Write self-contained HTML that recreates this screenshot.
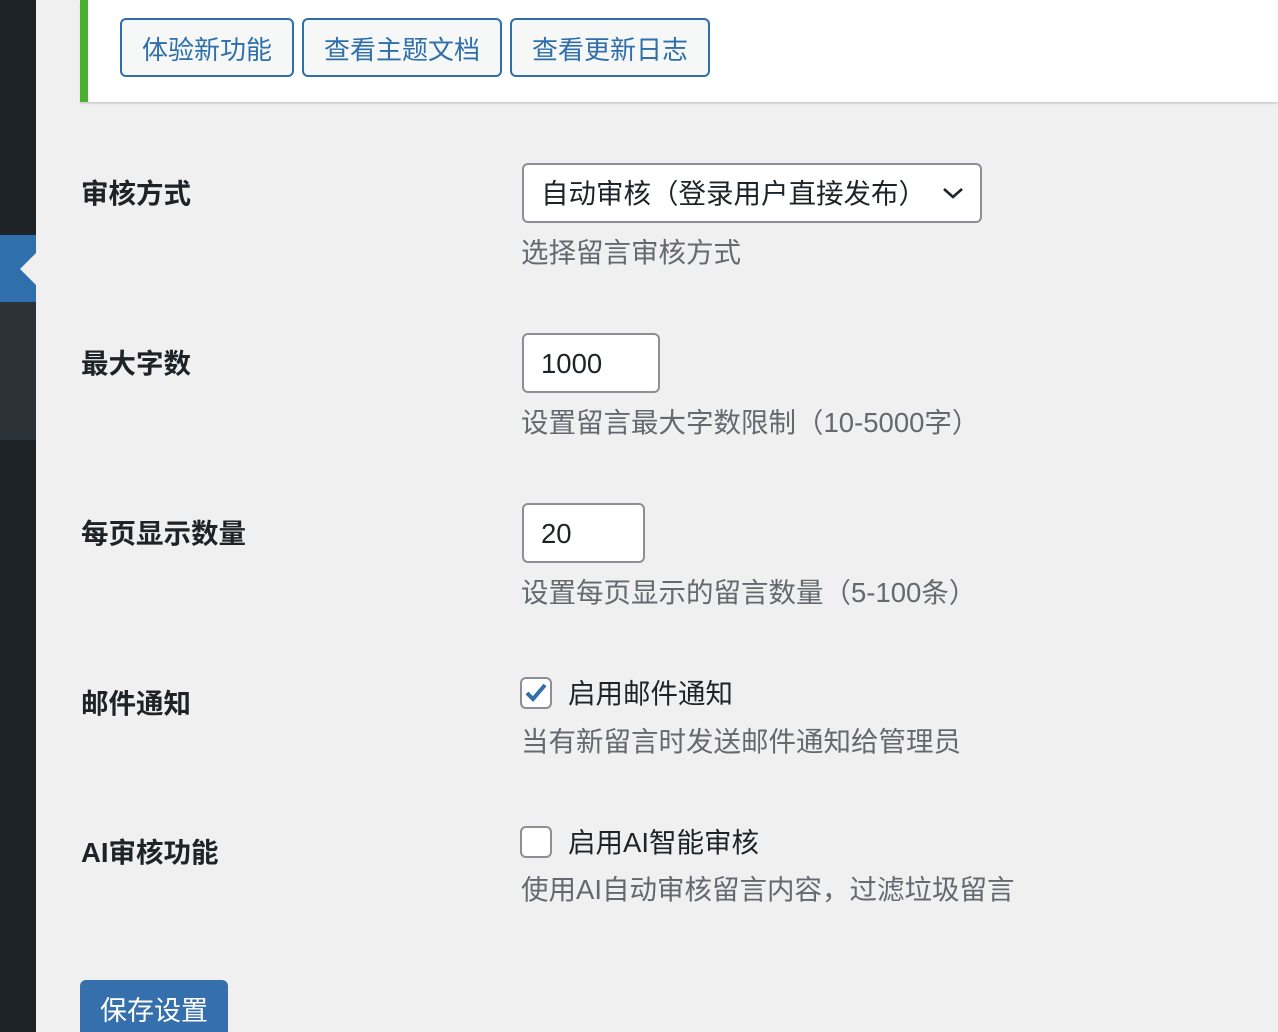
<!DOCTYPE html>
<html><head><meta charset="utf-8"><style>
*{box-sizing:border-box;margin:0;padding:0}
html{overflow:hidden;height:1032px}
body{width:1278px;height:1032px;overflow:hidden;background:#f0f0f1;font-family:"Liberation Sans","Noto Sans CJK SC",sans-serif;position:relative;color:#1d2327}
.abs{position:absolute;white-space:nowrap}
.side{position:absolute;left:0;top:0;width:36px;height:1032px;background:#1d2327}
.notice{position:absolute;left:80px;top:0;width:1198px;height:102px;background:#fff;border-left:8px solid #4ab02f;box-shadow:0 2px 1px rgba(0,0,0,.12)}
.btn{position:absolute;top:18px;height:59px;border:2px solid #2f6fab;border-radius:6px;background:#f6f7f7;color:#2f6fab;font-size:26px;line-height:60px;text-align:center;white-space:nowrap}
.lbl{position:absolute;left:81px;font-size:27.5px;font-weight:bold;line-height:30px;color:#1d2327;white-space:nowrap}
.desc{position:absolute;left:521px;font-size:27.5px;line-height:30px;color:#646970;white-space:nowrap}
.box{position:absolute;left:522px;background:#fff;border:2px solid #8c8f94;border-radius:6px;font-size:27.5px;line-height:57px;padding-left:17px;color:#1d2327;white-space:nowrap}
.cb{position:absolute;left:520px;width:32px;height:32px;border:2px solid #8c8f94;border-radius:6px;background:#fff}
.cbl{position:absolute;left:568px;font-size:27.5px;line-height:30px;color:#1d2327;white-space:nowrap}
</style></head><body>
<div class="side"></div>
<div class="abs" style="left:0;top:235px;width:36px;height:67px;background:#2f6fab"></div>
<div class="abs" style="left:0;top:302px;width:36px;height:138px;background:#2c3338"></div>
<div class="abs" style="left:20px;top:253px;width:0;height:0;border-top:16px solid transparent;border-bottom:16px solid transparent;border-right:16px solid #f0f0f1"></div>
<div class="notice"></div>
<div class="btn" style="left:120px;width:174px">体验新功能</div>
<div class="btn" style="left:302px;width:200px">查看主题文档</div>
<div class="btn" style="left:510px;width:200px">查看更新日志</div>

<div class="lbl" style="top:179px">审核方式</div>
<div class="box" style="top:163px;width:460px;height:60px">自动审核（登录用户直接发布）
<svg style="position:absolute;right:16px;top:20px" width="22" height="16" viewBox="0 0 22 16"><path d="M2 4 L11 12 L20 4" fill="none" stroke="#1d2327" stroke-width="2.6"/></svg></div>
<div class="desc" style="top:238px">选择留言审核方式</div>

<div class="lbl" style="top:349px">最大字数</div>
<div class="box" style="top:333px;width:138px;height:60px">1000</div>
<div class="desc" style="top:408px">设置留言最大字数限制（10-5000字）</div>

<div class="lbl" style="top:519px">每页显示数量</div>
<div class="box" style="top:503px;width:123px;height:60px">20</div>
<div class="desc" style="top:578px">设置每页显示的留言数量（5-100条）</div>

<div class="lbl" style="top:689px">邮件通知</div>
<div class="cb" style="top:677px"><svg width="28" height="28" viewBox="0 0 28 28"><path d="M5 14 L11 20 L23 6" fill="none" stroke="#2f6fab" stroke-width="4"/></svg></div>
<div class="cbl" style="top:679px">启用邮件通知</div>
<div class="desc" style="top:727px">当有新留言时发送邮件通知给管理员</div>

<div class="lbl" style="top:838px">AI审核功能</div>
<div class="cb" style="top:826px"></div>
<div class="cbl" style="top:828px">启用AI智能审核</div>
<div class="desc" style="top:875px">使用AI自动审核留言内容，过滤垃圾留言</div>

<div class="abs" style="left:80px;top:980px;width:148px;height:52px;background:#3570ad;border-radius:6px 6px 0 0;color:#fff;font-size:27px;line-height:62px;text-align:center;overflow:hidden">保存设置</div>
</body></html>
